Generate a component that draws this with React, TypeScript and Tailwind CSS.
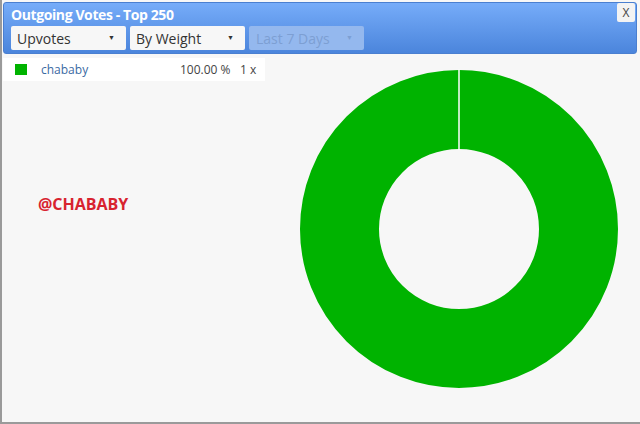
import React from "react";

const font = { fontFamily: '"Open Sans", "Liberation Sans", sans-serif' };

function Select({ label, disabled }: { label: string; disabled?: boolean }) {
  return (
    <div
      className={
        disabled
          ? "flex h-[24px] w-[115px] items-center justify-between rounded-[2px] bg-[#94b8ee] pl-[7px] pr-[11px] text-[14px] text-[#7d9fd3]"
          : "flex h-[24px] w-[115px] items-center justify-between rounded-[2px] bg-[#f7f7f7] pl-[6px] pr-[11px] text-[14px] text-[#333]"
      }
    >
      <span>{label}</span>
      <span className={disabled ? "text-[7px] text-[#7d9fd3]" : "text-[7px] text-[#333]"}>▼</span>
    </div>
  );
}

function Donut() {
  const cx = 160;
  const cy = 160;
  return (
    <svg width="320" height="320" viewBox="0 0 320 320">
      <circle cx={cx} cy={cy} r={119.5} fill="none" stroke="#00b300" strokeWidth={79} />
      <line x1={cx} y1={0.5} x2={cx} y2={81} stroke="#ffffff" strokeWidth={1.5} />
    </svg>
  );
}

export default function App() {
  return (
    <div
      style={font}
      className="flex h-[424px] w-[640px] flex-col overflow-hidden border-b-2 border-l-2 border-[#9a9a9a] bg-[#f7f7f7]"
    >
      {/* header */}
      <div className="ml-[1px] mr-[3px] mt-[2px] flex h-[52px] flex-col rounded-[3px] border border-[#4a7fd0] bg-gradient-to-b from-[#76acf9] to-[#4b85dc] px-[6px]">
        <div className="flex items-start justify-between">
          <span className="pl-[1px] pt-[2px] text-[14px] font-bold leading-[19px] tracking-[-0.4px] text-white">
            Outgoing Votes - Top 250
          </span>
          <div className="mr-[-5px] mt-[0px] flex h-[19px] w-[18px] items-center justify-center rounded-[2px] bg-[#f3f3f3] text-[12px] text-[#444]">
            X
          </div>
        </div>
        <div className="mt-[2px] flex gap-[4px] pl-[1px]">
          <Select label="Upvotes" />
          <Select label="By Weight" />
          <Select label="Last 7 Days" disabled />
        </div>
      </div>

      {/* body */}
      <div className="relative flex flex-1">
        <div className="flex w-[296px] flex-col">
          <div className="ml-[1px] mt-[4px] flex h-[23px] w-[262px] items-center bg-white text-[12px]">
            <div className="flex w-[34px] justify-center pl-[1px]">
              <div className="h-[11px] w-[12px] bg-[#00b300]" />
            </div>
            <span className="w-[139px] pl-[4px] text-[#3a6aa3]">chababy</span>
            <span className="w-[60px] pl-[4px] text-[#444]">100.00 %</span>
            <span className="pl-[4px] text-[#444]">1 x</span>
          </div>
          <div className="ml-[36px] mt-[111px] text-[16px] font-bold text-[#d8232f]">
            @CHABABY
          </div>
        </div>
        <div className="ml-[1px] mt-[15px]">
          <Donut />
        </div>
      </div>
    </div>
  );
}
